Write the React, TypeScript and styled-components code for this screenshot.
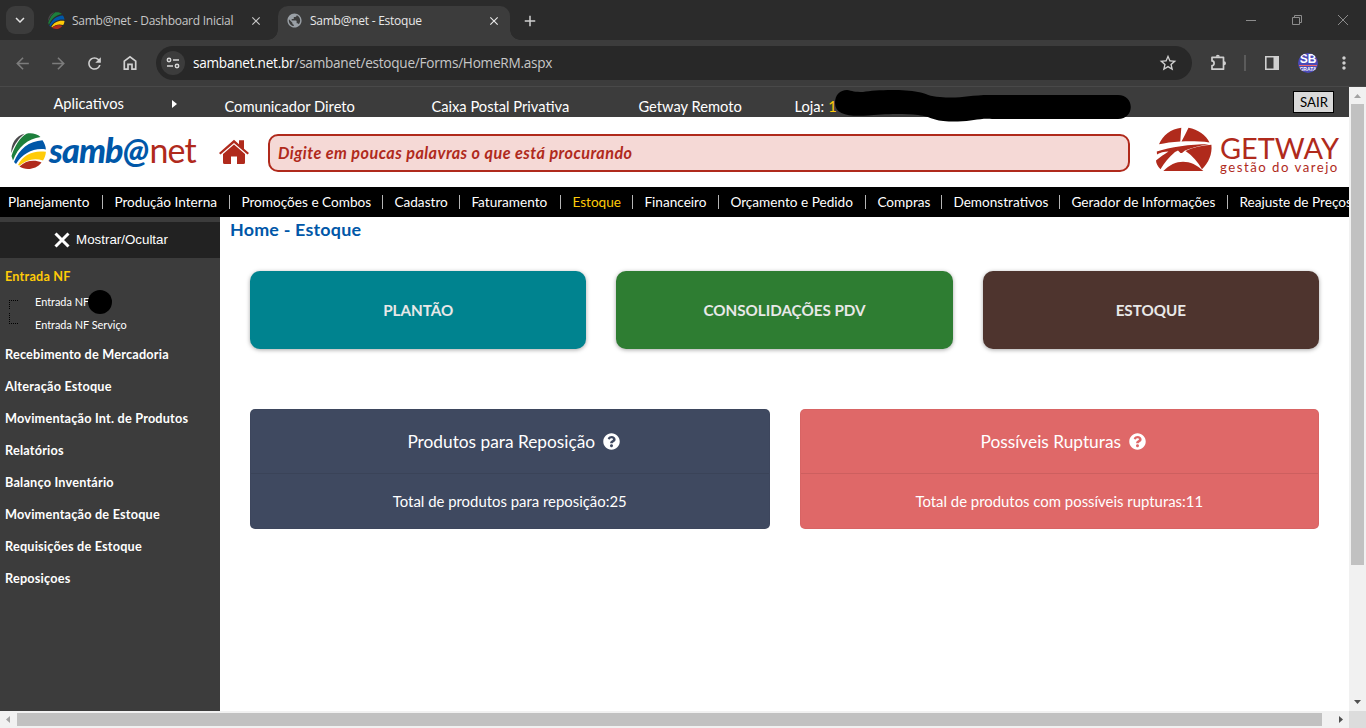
import React from 'react';
import styled, { createGlobalStyle } from 'styled-components';
import {
  MdArrowBack,
  MdArrowForward,
  MdRefresh,
  MdStarBorder,
  MdPublic,
  MdClose,
  MdAdd,
  MdMoreVert,
  MdKeyboardArrowDown,
} from 'react-icons/md';
import { FaQuestionCircle } from 'react-icons/fa';

const GlobalStyle = createGlobalStyle`
  * { box-sizing: border-box; }
  html, body { margin: 0; padding: 0; overflow: hidden; background: #fff; }
  body { font-family: Lato, "Open Sans", sans-serif; }
`;

const Window = styled.div`
  position: relative;
  width: 1366px;
  height: 728px;
  display: flex;
  flex-direction: column;
  overflow: hidden;
`;

/* ---------- Browser frame ---------- */

const TabStrip = styled.div`
  height: 40px;
  flex: none;
  display: flex;
  align-items: flex-end;
  background: #2b2b2b;
  padding-left: 6px;
`;

const TabSearch = styled.div`
  width: 28px;
  height: 28px;
  margin-bottom: 6px;
  border-radius: 9px;
  background: #3c3c3c;
  color: #e3e3e3;
  display: flex;
  align-items: center;
  justify-content: center;
`;

const Tab = styled.div<{ $active?: boolean; $width: number }>`
  position: relative;
  width: ${p => p.$width}px;
  height: 34px;
  display: flex;
  align-items: center;
  margin-left: ${p => (p.$active ? 1 : 5)}px;
  padding: 0 ${p => (p.$active ? '9px 5px 8px' : '14px 5px 9px')};
  border-radius: 10px 10px 0 0;
  background: ${p => (p.$active ? '#3c3c3c' : 'transparent')};
  color: ${p => (p.$active ? '#e8e8e8' : '#c7c7c7')};
  font: 12px 'Open Sans', sans-serif;
  ${p =>
    p.$active &&
    `&::before, &::after {
      content: '';
      position: absolute;
      bottom: 0;
      width: 10px;
      height: 10px;
    }
    &::before { left: -10px; background: radial-gradient(circle at 0 0, transparent 9.5px, #3c3c3c 10px); }
    &::after { right: -10px; background: radial-gradient(circle at 100% 0, transparent 9.5px, #3c3c3c 10px); }`}
`;

const TabTitle = styled.span`
  margin-left: 7px;
  flex: 1;
  white-space: nowrap;
  letter-spacing: -0.25px;
`;

const NewTab = styled.div`
  color: #d0d0d0;
  padding: 0 0 10px 11px;
  height: 28px;
  display: flex;
`;

const WindowButtons = styled.div`
  margin-left: auto;
  width: 138px;
  height: 40px;
  display: flex;
  svg { width: 46px; height: 40px; }
`;

const Toolbar = styled.div`
  height: 47px;
  flex: none;
  display: flex;
  align-items: center;
  background: #3c3c3c;
  border-bottom: 1px solid #494949;
  color: #c7c7c7;
`;

const NavButtons = styled.div`
  width: 156px;
  padding-left: 13px;
  display: flex;
  align-items: center;
  gap: 17px;
`;

const ToolIcon = styled.span<{ $dim?: boolean }>`
  display: flex;
  color: ${p => (p.$dim ? '#7c7c7c' : '#d0d0d0')};
`;

const AddressBar = styled.div`
  width: 1036px;
  height: 34px;
  border-radius: 17px;
  background: #282828;
  display: flex;
  align-items: center;
  padding: 0 14px 0 5px;
  font: 13.6px 'Open Sans', sans-serif;
  letter-spacing: -0.25px;
  color: #c7c7c7;
  b { font-weight: 400; color: #fff; }
`;

const SiteInfo = styled.span`
  width: 24px;
  height: 24px;
  border-radius: 50%;
  background: #3c3c3c;
  margin-right: 8px;
  display: flex;
  align-items: center;
  justify-content: center;
`;

const Url = styled.span`
  flex: 1;
  line-height: 18px;
`;

const Extensions = styled.div`
  flex: 1;
  display: flex;
  align-items: center;
  padding-left: 17px;
`;

const Divider = styled.span`
  width: 2px;
  height: 16px;
  margin: 0 18px 0 15px;
  background: #5b5b5b;
`;

const Avatar = styled.span`
  width: 20px;
  height: 20px;
  margin: 0 16px 0 18px;
  border-radius: 50%;
  overflow: hidden;
  background: #4a4ab8;
  color: #fff;
  display: flex;
  flex-direction: column;
  align-items: center;
  font: bold 12px/12px 'Liberation Sans', sans-serif;
  small { font: bold 5px/7px 'Liberation Sans', sans-serif; border-top: 1px solid #e66; }
`;

/* ---------- Page ---------- */

const Viewport = styled.div`
  flex: 1;
  display: grid;
  grid-template: minmax(0, 1fr) 17px / 1349px 17px;
  min-height: 0;
`;

const Page = styled.div`
  display: flex;
  flex-direction: column;
  overflow: hidden;
  background: #fff;
`;

const TopBar = styled.div`
  height: 30px;
  flex: none;
  display: flex;
  background: #3c3c3c;
  color: #fff;
  font-size: 14.7px;
  line-height: 20px;
  white-space: nowrap;
`;

const TopItem = styled.div<{ $width: number; $indent?: number; $top?: number }>`
  width: ${p => p.$width}px;
  padding: ${p => p.$top ?? 9}px 0 0 ${p => p.$indent ?? 0.4}px;
  display: flex;
  em { font-style: normal; color: #ffcb08; margin-left: 4px; }
`;

const Caret = styled.i`
  margin: 7px 0 0 48px;
  width: 0;
  height: 0;
  border: 4px solid transparent;
  border-left: 5px solid #fff;
  border-right: 0;
`;

const ExitButton = styled.button`
  width: 41px;
  height: 22px;
  margin: 4px 0 0;
  padding: 0 0 0 1px;
  border: 1px solid #000;
  background: #d9d9d9;
  color: #000;
  font: 13.2px Lato, sans-serif;
`;

const Header = styled.div`
  height: 70px;
  flex: none;
  display: flex;
  align-items: flex-start;
  padding-left: 11px;
`;

const Brand = styled.div`
  display: flex;
  width: 208px;
  height: 70px;
  padding-top: 16px;
`;

const BrandName = styled.div`
  display: flex;
  font-size: 34px;
  line-height: 33px;
  letter-spacing: -0.9px;
  color: #0057a8;
  font-weight: 900;
  font-style: italic;
  margin-left: 2px;
  span { font-weight: 400; font-style: normal; color: #b02a1c; margin-left: 1.5px; }
`;

const HomeIcon = styled.svg`
  flex: none;
  margin-top: 22px;
`;

const SearchBox = styled.div`
  width: 862px;
  height: 38px;
  margin: 17px 26px 0 19px;
  border: 2px solid #b02a1c;
  border-radius: 10px;
  background: #f5d9d6;
  color: #b02a1c;
  font-size: 16.2px;
  letter-spacing: 0.45px;
  font-weight: 700;
  font-style: italic;
  line-height: 34px;
  padding-left: 8px;
`;

const Partner = styled.div`
  display: flex;
  margin-top: 9px;
  color: #b02a1c;
`;

const PartnerText = styled.div`
  margin-left: 7px;
  white-space: nowrap;
`;

const PartnerName = styled.div`
  font-size: 28.9px;
  line-height: 26px;
  margin-top: 9px;
`;

const PartnerTag = styled.div`
  font-size: 13.2px;
  line-height: 12px;
  letter-spacing: 1.5px;
`;

const MainNav = styled.nav`
  height: 30px;
  flex: none;
  display: flex;
  align-items: center;
  background: #000;
  color: #fff;
  font-size: 13.62px;
`;

const NavItem = styled.span<{ $width: number; $active?: boolean; $first?: boolean }>`
  flex: none;
  width: ${p => p.$width}px;
  height: 14px;
  line-height: 14px;
  padding-left: ${p => (p.$first ? 8 : 11.4)}px;
  border-right: 1px solid #b5b5b5;
  white-space: nowrap;
  color: ${p => (p.$active ? '#ffcb08' : '#fff')};
`;

const Body = styled.div`
  flex: 1;
  display: flex;
  min-height: 0;
`;

const Sidebar = styled.aside`
  width: 220px;
  background: #3c3c3c;
  color: #fff;
  padding-top: 5px;
  font-size: 12.7px;
  letter-spacing: 0.2px;
  font-weight: 700;
`;

const Toggle = styled.div`
  height: 36px;
  background: #222;
  display: flex;
  align-items: center;
  justify-content: center;
  gap: 6px;
  padding-left: 2px;
  font: 13.33px 'Liberation Sans', sans-serif;
  letter-spacing: 0;
  margin-bottom: 2px;
  span { margin-top: -2px; }
`;

const MenuItem = styled.div<{ $active?: boolean }>`
  height: 32px;
  line-height: 33px;
  padding-left: 5px;
  color: ${p => (p.$active ? '#ffcb08' : '#fff')};
`;

const SubMenu = styled.div`
  display: flex;
  height: 46px;
  font-size: 10.9px;
  letter-spacing: 0;
  font-weight: 400;
`;

const Tree = styled.div`
  width: 9px;
  margin: 8px 17px 0 9px;
  display: flex;
  flex-direction: column;
  gap: 4px;
`;

const Branch = styled.i<{ $end?: boolean }>`
  height: ${p => (p.$end ? 11 : 9)}px;
  border-left: 1px dotted #000;
  border-${p => (p.$end ? 'bottom' : 'top')}: 1px dotted #000;
`;

const SubItem = styled.div`
  height: 23px;
  line-height: 20px;
  display: flex;
  white-space: nowrap;
`;

const Dot = styled.i`
  width: 24px;
  height: 24px;
  margin: -2px 0 0 -1px;
  border-radius: 50%;
  background: #000;
`;

const Main = styled.main`
  flex: 1;
  padding: 1px 30px 0;
`;

const Title = styled.h1`
  margin: 0 0 31px -20px;
  font-size: 17.9px;
  letter-spacing: 0.2px;
  line-height: 22px;
  font-weight: 700;
  color: #0057a8;
`;

const Row = styled.div`
  display: flex;
  gap: 30px;
`;

const ActionCard = styled.div<{ $color: string }>`
  flex: 1;
  height: 78px;
  border-radius: 10px;
  background: ${p => p.$color};
  box-shadow: 0 1px 4px rgba(0, 0, 0, 0.35);
  color: #e8e8e8;
  font-size: 15.2px;
  font-weight: 700;
  display: flex;
  align-items: center;
  justify-content: center;
  padding-bottom: 1px;
`;

const StatCard = styled.div<{ $color: string }>`
  flex: 1;
  height: 120px;
  margin-top: 60px;
  border-radius: 5px;
  background: ${p => p.$color};
  border: 1px solid rgba(0, 0, 0, 0.03);
  color: #fff;
  text-align: center;
`;

const StatTitle = styled.div`
  height: 64px;
  display: flex;
  align-items: center;
  justify-content: center;
  gap: 8px;
  padding-left: 8px;
  border-bottom: 1px solid rgba(0, 0, 0, 0.08);
  font-size: 17.3px;
`;

const StatValue = styled.div`
  font-size: 14.9px;
  line-height: 54px;
`;

/* ---------- Scrollbars ---------- */

const VScroll = styled.div`
  background: #f1f1f1;
  display: flex;
  flex-direction: column;
  align-items: center;
`;

const HScroll = styled.div`
  background: #f1f1f1;
  display: flex;
  align-items: center;
`;

const Thumb = styled.div<{ $w: number; $h: number }>`
  width: ${p => p.$w}px;
  height: ${p => p.$h}px;
  background: #c1c1c1;
`;

const Spacer = styled.div`
  flex: 1;
`;

const Corner = styled.div`
  background: #dcdcdc;
`;

const Scribble = styled.svg`
  position: absolute;
  left: 830px;
  top: 86px;
`;

const ScrollArrow = ({ d, color }: { d: string; color: string }) => (
  <svg width="17" height="17" viewBox="0 0 17 17"><path d={d} fill={color} /></svg>
);

const SambaGlobe = ({ size }: { size: number }) => (
  <svg width={size} height={size} viewBox="0 0 36 36">
    <path d="M0.3 20C0 10 5 3 13.5 0.7C8 5 3.5 11 0.3 20Z" fill="#4a4a4c" />
    <path d="M0.5 23C4 12 9 4.500 15.500 .7C21-.3 26 1 29.500 4C17 5.500 7 14 2 27.500Z" fill="#1d7f3c" />
    <path d="M3 29C8 16 18 8 31.500 7.200C33.500 10 34.700 13 34.900 16.500C23 14.500 12 20 5 31Z" fill="#0057a8" />
    <path d="M7 32C12 22 22 17 34.900 18.800C34.800 22 33.700 25 32 27.500C23 24.500 15 27 8.500 32.500Z" fill="#ffcb08" />
    <path d="M8.500 33.500C15 27 24 26.500 30.500 29.500C25 37 14 37.500 8.500 33.500Z" fill="#b02a1c" />
  </svg>
);

const House = () => (
  <HomeIcon width="30" height="26" viewBox="0 0 30 26" fill="#b02a1c">
    <path d="M15 .8L20 5.300V1.200H25V9.800L30 14L28.500 15.500L15 3.900L1.500 15.500L0 14Z" />
    <path d="M15 5.600L26 15V23.500Q26 25 24.500 25H18V17.500H12V25H5.500Q4 25 4 23.500V15Z" />
  </HomeIcon>
);

const GetwayMark = () => (
  <svg width="57" height="47" viewBox="0 0 57 47" fill="#b02a1c">
    <path d="M3 18.300C7 9 15 3 25.300 1.700L24.300 15.500C16 16 9 17 3 18.300Z" />
    <path d="M32.500 1.700C42 3.500 50 9 53.500 16.500C45 15.400 35 15.200 25.500 15.500C28 11 30.500 6 32.500 1.700Z" />
    <path d="M.8 25.500C14 20.800 34 18.200 53 18.200C43 19.500 35 22 29 24.500L26 27H24.500L22 24.500L19 26C13 31 8 37 4.500 43.300C1.500 40 .2 37.500 0 34.500C4 31 9 27.800 12.500 25.500C8 25.500 4 26.500 1 28.500Z" />
    <path d="M29.500 24.900C37 21.500 46 19.300 55.400 18.800C56.500 28 52.500 37 46 43.300C42 36 36.500 29.500 29.500 24.900Z" />
    <path d="M7.300 45C19 32.500 35 32.500 47.300 45Z" />
  </svg>
);

const navItems: [string, number][] = [
  ['Planejamento', 103], ['Produção Interna', 127], ['Promoções e Combos', 153],
  ['Cadastro', 77], ['Faturamento', 101], ['Estoque', 72], ['Financeiro', 86],
  ['Orçamento e Pedido', 147], ['Compras', 76], ['Demonstrativos', 118],
  ['Gerador de Informações', 168], ['Reajuste de Preços', 140],
];

const menu = [
  'Recebimento de Mercadoria', 'Alteração Estoque', 'Movimentação Int. de Produtos',
  'Relatórios', 'Balanço Inventário', 'Movimentação de Estoque',
  'Requisições de Estoque', 'Reposiçoes',
];

export default function App() {
  return (
    <Window>
      <GlobalStyle />
      <TabStrip>
        <TabSearch><MdKeyboardArrowDown size={18} /></TabSearch>
        <Tab $width={238}>
          <SambaGlobe size={17} />
          <TabTitle>Samb@net - Dashboard Inicial</TabTitle>
          <MdClose size={14} />
        </Tab>
        <Tab $width={232} $active>
          <MdPublic size={17} color="#9aa0a6" />
          <TabTitle>Samb@net - Estoque</TabTitle>
          <MdClose size={14} />
        </Tab>
        <NewTab><MdAdd size={18} /></NewTab>
        <WindowButtons>
          <svg viewBox="0 0 46 40"><path d="M18 20.500H28" stroke="#8c8c8c" /></svg>
          <svg viewBox="0 0 46 40"><path d="M18.500 17.500H25.500V24.500H18.500ZM20.500 17V15.500H27.500V22.500H26" stroke="#8c8c8c" fill="none" /></svg>
          <svg viewBox="0 0 46 40"><path d="M18 15L28 25M28 15L18 25" stroke="#8c8c8c" /></svg>
        </WindowButtons>
      </TabStrip>
      <Toolbar>
        <NavButtons>
          <ToolIcon $dim><MdArrowBack size={19} /></ToolIcon>
          <ToolIcon $dim><MdArrowForward size={19} /></ToolIcon>
          <ToolIcon><MdRefresh size={19} /></ToolIcon>
          <ToolIcon>
            <svg width="18" height="18" viewBox="0 0 18 18" fill="none" stroke="currentColor" strokeWidth="1.700">
              <path d="M3.300 15.200V7.200L9 2.800L14.700 7.200V15.200H11V10.300H7V15.200Z" />
            </svg>
          </ToolIcon>
        </NavButtons>
        <AddressBar>
          <SiteInfo>
            <svg width="14" height="12" viewBox="0 0 14 12" fill="none" stroke="#d8d8d8" strokeWidth="1.500">
              <circle cx="3" cy="3" r="1.700" /><path d="M7 3H13M1 9H7" /><circle cx="11" cy="9" r="1.700" />
            </svg>
          </SiteInfo>
          <Url><b>sambanet.net.br</b>/sambanet/estoque/Forms/HomeRM.aspx</Url>
          <MdStarBorder size={20} color="#d0d0d0" />
        </AddressBar>
        <Extensions>
          <svg width="20" height="20" viewBox="0 0 20 20">
            <path d="M3 4.300H14.500V16.200H3V12.600C5.800 12.600 5.800 7.900 3 7.900Z" fill="none" stroke="#d0d0d0" strokeWidth="1.700" strokeLinejoin="round" />
            <path d="M6.800 3.800A2 2 0 0 1 10.800 3.800ZM15 8.200A2 2 0 0 1 15 12.200Z" fill="#d0d0d0" />
          </svg>
          <Divider />
          <svg width="16" height="16" viewBox="0 0 16 16">
            <path d="M1.800 1.800H14.200V14.200H1.800Z" fill="none" stroke="#d0d0d0" strokeWidth="1.600" />
            <path d="M9.500 1H15V15H9.500Z" fill="#d0d0d0" />
          </svg>
          <Avatar>SB<small>GRATA</small></Avatar>
          <MdMoreVert size={20} color="#d0d0d0" />
        </Extensions>
      </Toolbar>
      <Viewport>
        <Page>
          <TopBar>
            <TopItem $width={224} $top={6} $indent={53.4}>Aplicativos<Caret /></TopItem>
            <TopItem $width={207}>Comunicador Direto</TopItem>
            <TopItem $width={207}>Caixa Postal Privativa</TopItem>
            <TopItem $width={156}>Getway Remoto</TopItem>
            <TopItem $width={499}>Loja:<em>1</em></TopItem>
            <ExitButton>SAIR</ExitButton>
          </TopBar>
          <Header>
            <Brand>
              <SambaGlobe size={36} />
              <BrandName>samb@<span>net</span></BrandName>
            </Brand>
            <House />
            <SearchBox>Digite em poucas palavras o que está procurando</SearchBox>
            <Partner>
              <GetwayMark />
              <PartnerText>
                <PartnerName>GETWAY</PartnerName>
                <PartnerTag>gestão do varejo</PartnerTag>
              </PartnerText>
            </Partner>
          </Header>
          <MainNav>
            {navItems.map(([label, w], i) => (
              <NavItem key={label} $width={w} $first={i === 0} $active={label === 'Estoque'}>{label}</NavItem>
            ))}
          </MainNav>
          <Body>
            <Sidebar>
              <Toggle>
                <svg width="16" height="16" viewBox="0 0 16 16"><path d="M1.500 1.500L14.500 14.500M14.500 1.500L1.500 14.500" stroke="#fff" strokeWidth="3" /></svg>
                <span>Mostrar/Ocultar</span>
              </Toggle>
              <MenuItem $active>Entrada NF</MenuItem>
              <SubMenu>
                <Tree><Branch /><Branch $end /></Tree>
                <div>
                  <SubItem>Entrada NF<Dot /></SubItem>
                  <SubItem>Entrada NF Serviço</SubItem>
                </div>
              </SubMenu>
              {menu.map(m => <MenuItem key={m}>{m}</MenuItem>)}
            </Sidebar>
            <Main>
              <Title>Home - Estoque</Title>
              <Row>
                <ActionCard $color="#00838f">PLANTÃO</ActionCard>
                <ActionCard $color="#2e7d32">CONSOLIDAÇÕES PDV</ActionCard>
                <ActionCard $color="#4e342e">ESTOQUE</ActionCard>
              </Row>
              <Row>
                <StatCard $color="#3f4960">
                  <StatTitle>Produtos para Reposição<FaQuestionCircle size={17} /></StatTitle>
                  <StatValue>Total de produtos para reposição:25</StatValue>
                </StatCard>
                <StatCard $color="#df6868">
                  <StatTitle>Possíveis Rupturas<FaQuestionCircle size={17} /></StatTitle>
                  <StatValue>Total de produtos com possíveis rupturas:11</StatValue>
                </StatCard>
              </Row>
            </Main>
          </Body>
        </Page>
        <VScroll>
          <ScrollArrow d="M5 11L8.500 7L12 11Z" color="#a3a3a3" />
          <Thumb $w={13} $h={461} />
          <Spacer />
          <ScrollArrow d="M5 6L8.500 10L12 6Z" color="#505050" />
        </VScroll>
        <HScroll>
          <ScrollArrow d="M10 5L6 8.500L10 12Z" color="#a3a3a3" />
          <Thumb $w={1305} $h={13} />
          <Spacer />
          <ScrollArrow d="M7 5L11 8.500L7 12Z" color="#505050" />
        </HScroll>
        <Corner />
      </Viewport>
      <Scribble width="304" height="38" viewBox="0 0 304 38">
        <path d="M5 17C5 9 10 4 17 4C22 5 25 6 33 6C45 4 72 3 88 6C96 7 100 11 110 11C130 13 138 9 160 9H288C305 9 305 33 288 33H162C148 32 142 36 125 35.500C104 36 103 31 88 29C72 27 50 28 38 29.500C18 31 5 28 5 17Z" fill="#000" />
      </Scribble>
    </Window>
  );
}
